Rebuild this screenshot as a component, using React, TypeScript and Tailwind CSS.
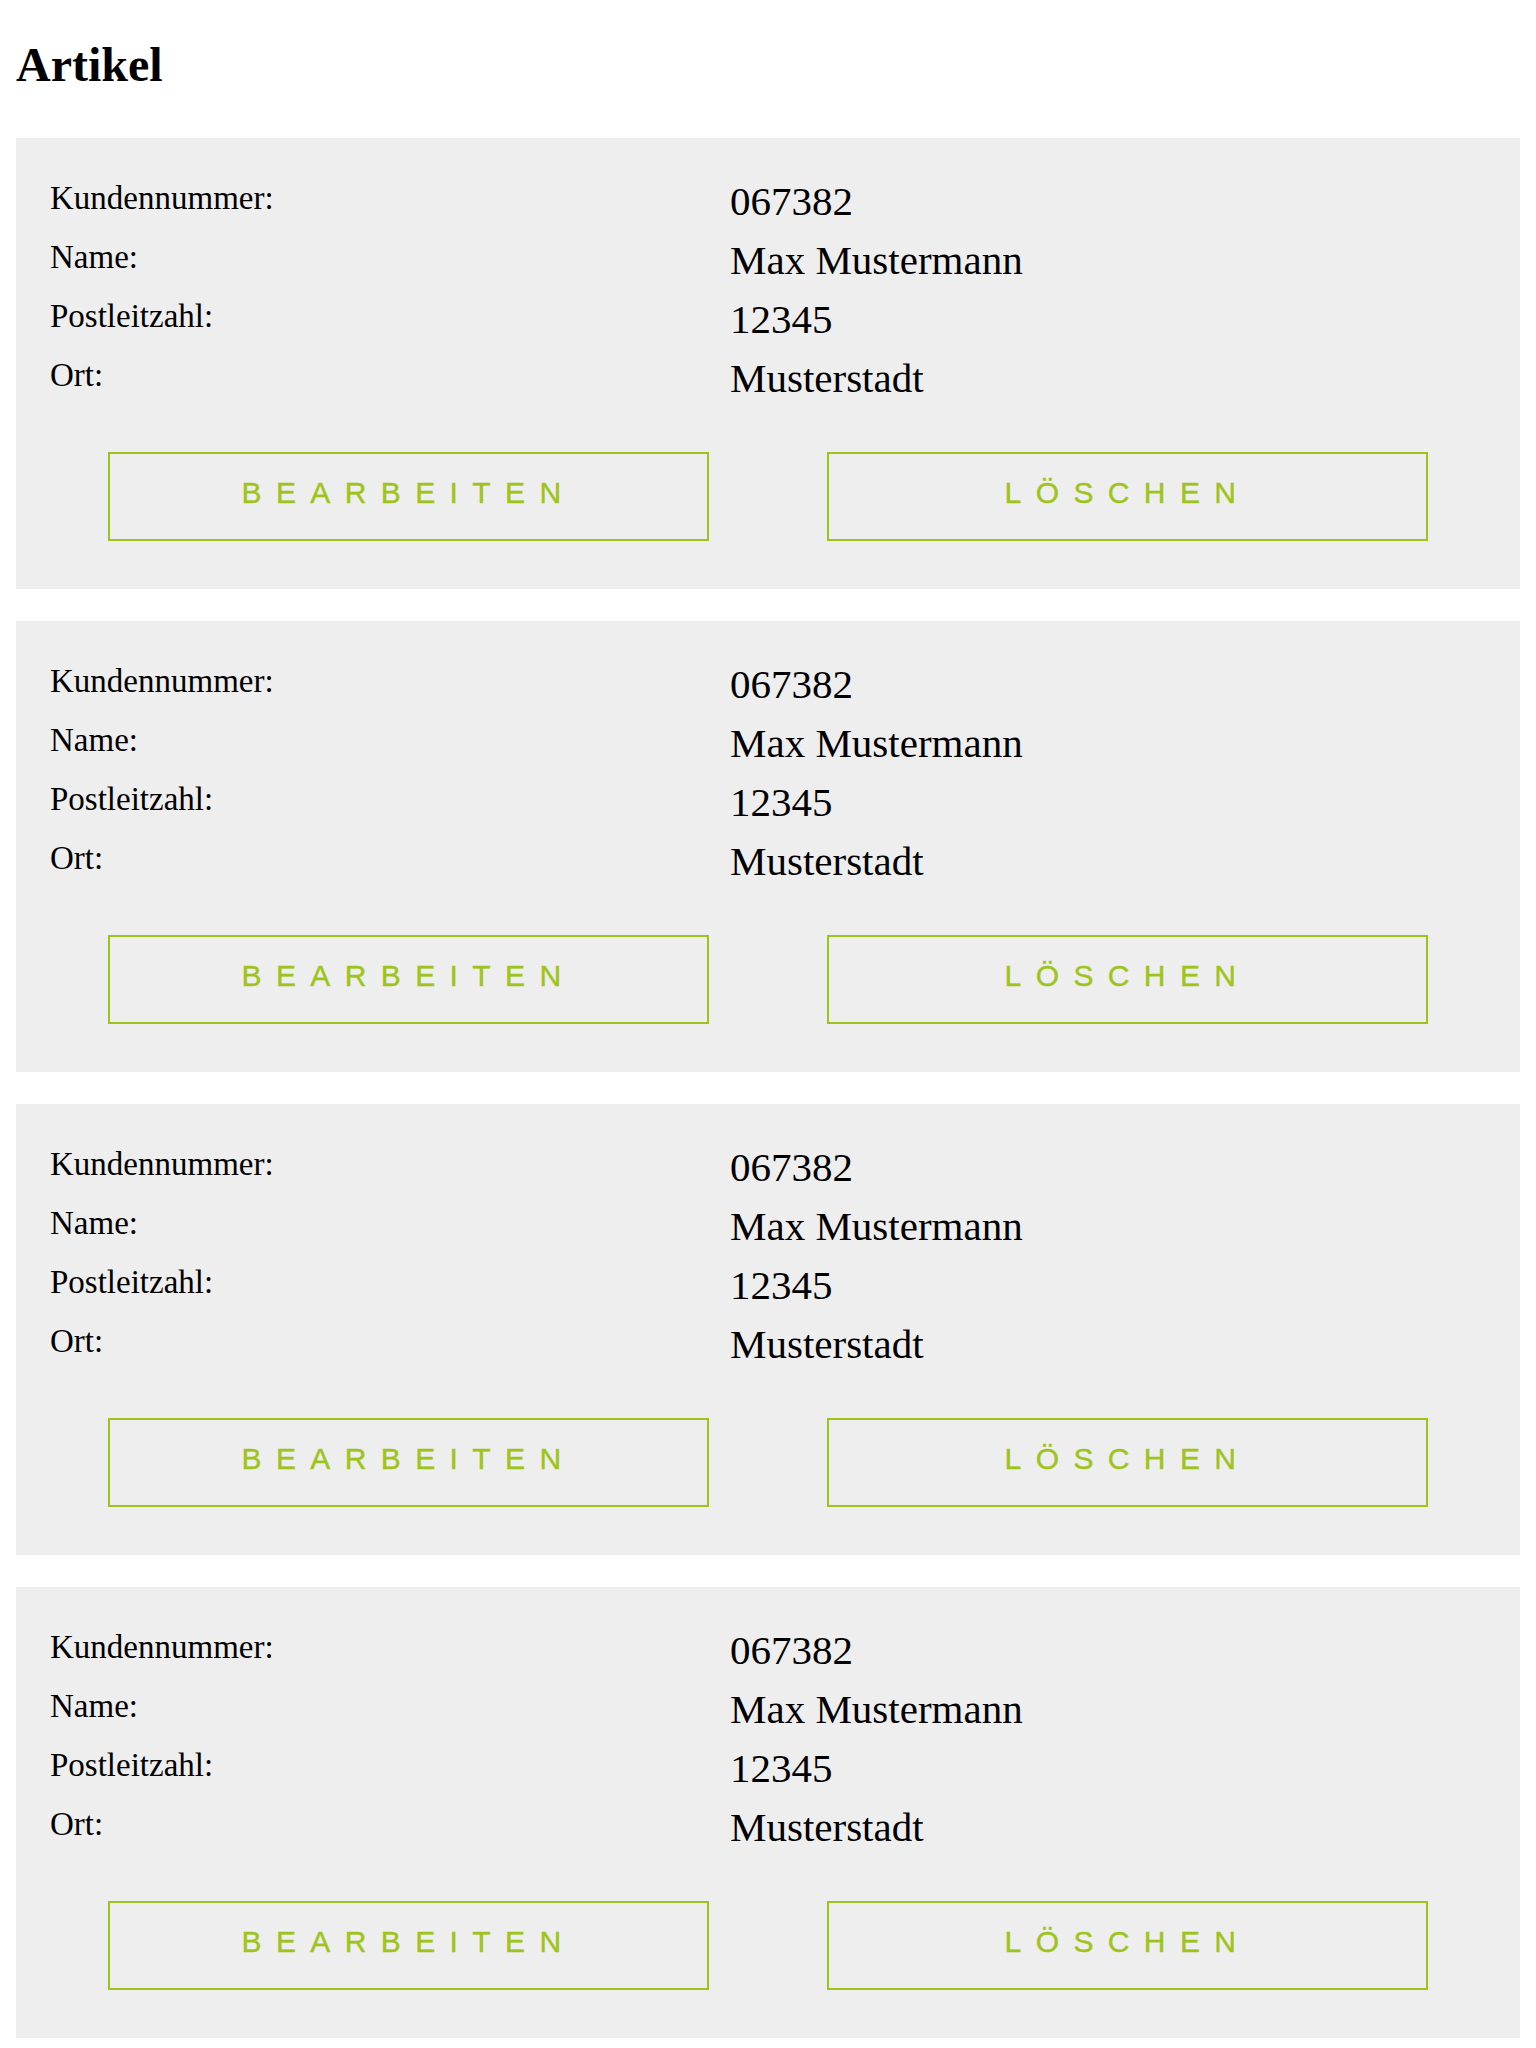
const rows = [
  { label: 'Kundennummer:', value: '067382' },
  { label: 'Name:', value: 'Max Mustermann' },
  { label: 'Postleitzahl:', value: '12345' },
  { label: 'Ort:', value: 'Musterstadt' },
];

function ArticleCard() {
  return (
    <div className="bg-[#eeeeee] px-[34px] pt-[31px] pb-[48px]">
      <div className="grid grid-cols-[680px_1fr] items-start">
        <div className="flex flex-col">
          {rows.map((r) => (
            <div key={r.label} className="text-[33px] leading-[59px] text-black">
              {r.label}
            </div>
          ))}
        </div>
        <div className="mt-[3px] flex flex-col">
          {rows.map((r) => (
            <div key={r.label} className="text-[41px] leading-[59px] text-black">
              {r.value}
            </div>
          ))}
        </div>
      </div>
      <div className="mt-[44px] flex justify-center gap-[118px]">
        <button className="flex h-[89px] w-[601px] items-center justify-center border-2 border-[#9ec41c] pb-[8px] font-['Liberation_Sans',Arial,sans-serif] text-[30px] tracking-[14.4px] text-[#9ec41c] [-webkit-text-stroke:0.4px_#9ec41c]">
          BEARBEITEN
        </button>
        <button className="flex h-[89px] w-[601px] items-center justify-center border-2 border-[#9ec41c] pb-[8px] font-['Liberation_Sans',Arial,sans-serif] text-[30px] tracking-[14.4px] text-[#9ec41c] [-webkit-text-stroke:0.4px_#9ec41c]">
          LÖSCHEN
        </button>
      </div>
    </div>
  );
}

export default function App() {
  return (
    <div className="min-h-screen bg-white px-4 font-['Liberation_Serif','Times_New_Roman',serif]">
      <h1 className="pt-[29px] text-[48px] font-bold leading-normal text-black">Artikel</h1>
      <div className="mt-[37px] flex flex-col gap-[32px]">
        {[0, 1, 2, 3].map((i) => (
          <ArticleCard key={i} />
        ))}
      </div>
    </div>
  );
}
